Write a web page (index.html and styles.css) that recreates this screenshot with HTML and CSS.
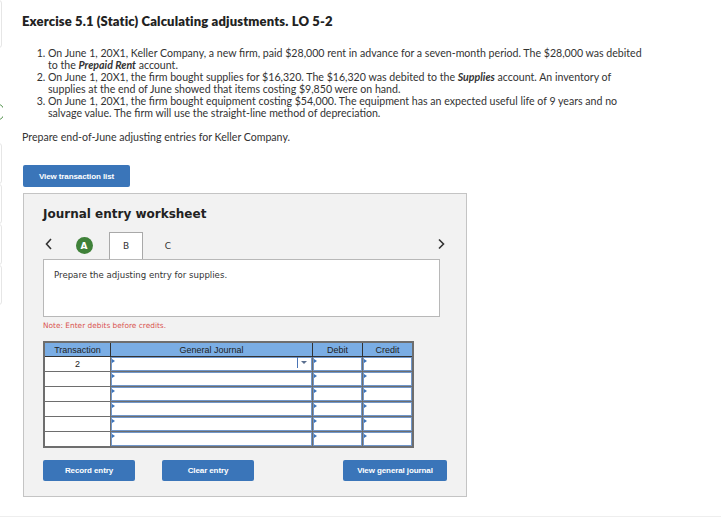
FILE: index.html
```html
<!DOCTYPE html>
<html lang="en">
<head>
  <meta charset="UTF-8">
  <title>Exercise 5.1 (Static) Calculating adjustments</title>
  <link rel="stylesheet" href="styles.css">
</head>
<body>
  <div class="page">
    <div class="side">
      <div class="side-box h48"></div>
      <div class="side-ring"></div>
      <div class="side-box h41"></div>
      <div class="side-box h40"></div>
      <div class="side-box h41"></div>
      <div class="side-box h40"></div>
    </div>

    <div class="main">
      <h1 class="title">Exercise 5.1 (Static) Calculating adjustments. LO 5-2</h1>

      <ol class="facts">
        <li>On June 1, 20X1, Keller Company, a new firm, paid $28,000 rent in advance for a seven-month period. The $28,000 was debited<br>to the <em>Prepaid Rent</em> account.</li>
        <li>On June 1, 20X1, the firm bought supplies for $16,320. The $16,320 was debited to the <em>Supplies</em> account. An inventory of<br>supplies at the end of June showed that items costing $9,850 were on hand.</li>
        <li>On June 1, 20X1, the firm bought equipment costing $54,000. The equipment has an expected useful life of 9 years and no<br>salvage value. The firm will use the straight-line method of depreciation.</li>
      </ol>

      <p class="prompt">Prepare end-of-June adjusting entries for Keller Company.</p>

      <button type="button" class="btn btn-list">View transaction list</button>

      <div class="panel">
        <h2>Journal entry worksheet</h2>

        <div class="tabs">
          <button type="button" class="arrow">
            <svg width="8" height="12" viewBox="0 0 8 12"><polyline points="6,1 1.5,6 6,11" fill="none" stroke="#333" stroke-width="1.6"/></svg>
          </button>
          <div class="tab"><span class="done">A</span></div>
          <div class="tab current">B</div>
          <div class="tab">C</div>
          <button type="button" class="arrow next">
            <svg width="8" height="12" viewBox="0 0 8 12"><polyline points="2,1.5 6.5,6 2,10.5" fill="none" stroke="#333" stroke-width="1.6"/></svg>
          </button>
        </div>

        <div class="question">Prepare the adjusting entry for supplies.</div>

        <p class="note">Note: Enter debits before credits.</p>

        <table class="journal">
          <thead>
            <tr>
              <th class="c-tr">Transaction</th>
              <th class="c-gj">General Journal</th>
              <th class="c-amt">Debit</th>
              <th class="c-amt last">Credit</th>
            </tr>
          </thead>
          <tbody id="rows"></tbody>
        </table>

        <div class="actions">
          <button type="button" class="btn">Record entry</button>
          <button type="button" class="btn">Clear entry</button>
          <button type="button" class="btn btn-wide">View general journal</button>
        </div>
      </div>
    </div>
  </div>

  <script>
    const rows = document.getElementById("rows");
    for (let i = 0; i < 6; i++) {
      const tr = document.createElement("tr");
      const account = i === 0 ? '<span class="pick"></span>' : '';
      tr.innerHTML =
        '<td class="c-tr">' + (i === 0 ? '2' : '') + '</td>' +
        '<td class="cell"><div class="field">' + account + '</div></td>' +
        '<td class="cell"><div class="field"></div></td>' +
        '<td class="cell last"><div class="field"></div></td>';
      rows.appendChild(tr);
    }
  </script>
</body>
</html>
```

FILE: styles.css
```css
body {
  margin: 0;
  background: #fff;
  color: #333;
  font-family: "Lato", "Liberation Sans", sans-serif;
}

.page {
  display: flex;
  padding-bottom: 19px;
  border-bottom: 1px solid #eeeeee;
}

/* cut-off sidebar at the left edge */
.side {
  width: 3px;
  overflow: hidden;
  flex-shrink: 0;
}

.side-box {
  width: 40px;
  margin-left: -38px;
  border: 1px solid #e6e6e6;
  border-radius: 3px;
  box-sizing: border-box;
}

.h48 { height: 48px; margin-bottom: 55px; }
.h41 { height: 41px; }
.h40 { height: 40px; }

.side-ring {
  width: 16px;
  height: 16px;
  margin-left: -13px;
  margin-bottom: 22px;
  border: 1px solid #5f9a5a;
  border-radius: 50%;
}

.main {
  padding: 13px 0 0 19px;
}

.title {
  margin: 0;
  font-size: 13px;
  line-height: 16px;
  font-weight: 800;
  letter-spacing: 0.15px;
  color: #222;
}

.facts {
  margin: 18px 0 0;
  padding-left: 26px;
  font-size: 10.6px;
  line-height: 12px;
  white-space: nowrap;
}

.facts em {
  font-weight: bold;
}

.prompt {
  margin: 12px 0 0;
  font-size: 10.6px;
  line-height: 12px;
}

.btn {
  height: 21px;
  padding: 0;
  border: none;
  border-radius: 2px;
  background-color: #3a75b9;
  color: #fff;
  font-family: "Liberation Sans", Arial, sans-serif;
  font-size: 8px;
  font-weight: bold;
  letter-spacing: -0.1px;
  cursor: pointer;
  width: 92px;
}

.btn-list {
  display: block;
  width: 107px;
  height: 22px;
  margin: 22px 0 0 1px;
}

.panel {
  width: 404px;
  margin: 6px 0 0 1px;
  padding: 13px 19px 15px;
  background: #f2f2f2;
  border: 1px solid #c4c4c4;
}

h2 {
  margin: 0;
  font-family: "DejaVu Sans", Verdana, sans-serif;
  font-size: 12px;
  line-height: 14px;
  font-weight: bold;
  color: #222;
}

.tabs {
  display: flex;
  align-items: center;
  height: 27px;
  margin-top: 11px;
}

.arrow {
  width: 24px;
  height: 27px;
  padding: 0 0 0 2px;
  border: none;
  background: none;
  text-align: left;
}

.arrow.next {
  margin-left: auto;
  width: 12px;
}

.tab {
  width: 34px;
  height: 27px;
  margin-right: 8px;
  box-sizing: border-box;
  display: flex;
  align-items: center;
  justify-content: center;
  font-family: "DejaVu Sans", Verdana, sans-serif;
  font-size: 9px;
  color: #333;
}

.tab.current {
  background: #fff;
  border: 1px solid #a9a9a9;
  border-bottom: none;
}

.done {
  width: 17px;
  height: 17px;
  border-radius: 50%;
  background: #3f8139;
  color: #fff;
  font-weight: bold;
  display: flex;
  align-items: center;
  justify-content: center;
}

.question {
  width: 397px;
  height: 58px;
  box-sizing: border-box;
  padding: 9px 10px;
  background: #fff;
  border: 1px solid #b8b8b8;
  font-family: "DejaVu Sans", Verdana, sans-serif;
  font-size: 8.6px;
  line-height: 12px;
  color: #333;
}

.note {
  margin: 4px 0 0;
  font-family: "DejaVu Sans", Verdana, sans-serif;
  font-size: 7.4px;
  line-height: 10px;
  color: #d9534f;
}

.journal {
  margin-top: 10px;
  border-collapse: separate;
  border-spacing: 0;
  table-layout: fixed;
  border: 2px solid #6e6e6e;
  font-family: "Liberation Sans", Arial, sans-serif;
  font-size: 9px;
  color: #222;
}

.journal th {
  height: 13px;
  padding: 0;
  background: #7aade4;
  border-right: 1px solid #333;
  border-bottom: 1px solid #333;
  font-weight: normal;
}

.journal td {
  height: 14px;
  padding: 0;
  border-right: 1px solid #6e6e6e;
  border-bottom: 1px solid #6e6e6e;
  background: #fff;
  text-align: center;
  vertical-align: middle;
}

.journal tr:last-child td {
  border-bottom: none;
}

.journal .last {
  border-right: none;
}

.c-tr { width: 65px; }
.c-gj { width: 201px; }
.c-amt { width: 49px; }

.journal td.cell {
  position: relative;
  vertical-align: top;
}

.field {
  height: 12px;
  border: 1px solid #7197cb;
  background: #fff;
  position: relative;
}

/* little blue marker in the top-left corner of each input */
.field::before {
  content: "";
  position: absolute;
  left: 0;
  top: 1px;
  border-left: 3px solid #3b73b9;
  border-top: 2px solid transparent;
  border-bottom: 2px solid transparent;
}

.pick {
  position: absolute;
  right: 4px;
  top: -1px;
  width: 9px;
  height: 11px;
  border-left: 1px solid #4a74b5;
}

.pick::after {
  content: "";
  position: absolute;
  right: 0;
  top: 4px;
  border-top: 3px solid #5a6f8f;
  border-left: 3px solid transparent;
  border-right: 3px solid transparent;
}

.actions {
  display: flex;
  gap: 27px;
  margin-top: 12px;
}

.btn-wide {
  width: 104px;
  margin-left: auto;
}
```
